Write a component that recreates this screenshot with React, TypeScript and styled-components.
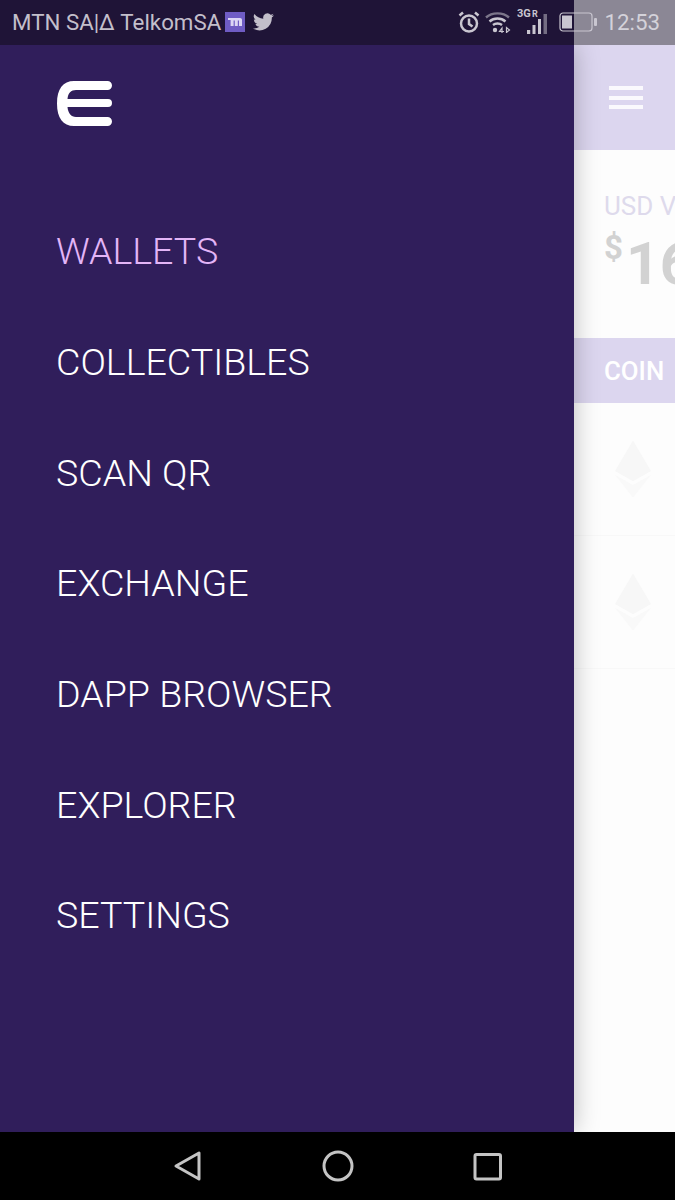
import styled, { createGlobalStyle } from 'styled-components'

const GlobalStyle = createGlobalStyle`
  html, body {
    margin: 0;
    padding: 0;
    background: #000;
  }
  * {
    box-sizing: border-box;
  }
`

const Screen = styled.div`
  width: 675px;
  height: 1200px;
  display: flex;
  flex-direction: column;
  overflow: hidden;
  font-family: Roboto, 'Noto Sans', sans-serif;
`

const StatusBar = styled.div`
  position: relative;
  z-index: 3;
  height: 45px;
  flex: none;
  display: grid;
  grid-template-columns: 574px 101px;
`

const StatusLeft = styled.div`
  background: #1f1437;
  display: flex;
  align-items: center;
  padding: 0 0 2px 12px;
  min-width: 0;
`

const StatusRight = styled.div`
  background: #8b8795;
`

const Carrier = styled.div`
  display: flex;
  align-items: center;
  color: #c3bfcb;
  font-size: 22.3px;
  white-space: nowrap;
`

const TrayIcon = styled.svg<{ $gap?: number }>`
  display: block;
  flex: none;
  margin-left: ${p => p.$gap ?? 0}px;
`

const Tray = styled.div`
  position: absolute;
  right: 15px;
  top: 0;
  height: 45px;
  padding-bottom: 1px;
  display: flex;
  align-items: center;
  color: #c9c6d0;
`

const Clock = styled.span`
  font-size: 22.3px;
  margin-left: 7px;
  color: #d4d2da;
`

const Body = styled.div`
  flex: 1;
  display: flex;
  min-height: 0;
`

const Drawer = styled.nav`
  position: relative;
  z-index: 2;
  width: 574px;
  flex: none;
  background: #301e5b;
  box-shadow: 0 0 24px rgba(0, 0, 0, 0.26);
  padding: 36px 0 0 57px;
`

const Logo = styled.svg`
  display: block;
`

const Menu = styled.ul`
  list-style: none;
  margin: 70px 0 0 -1px;
  padding: 0;
  display: flex;
  flex-direction: column;
`

const MenuItem = styled.li<{ $active?: boolean }>`
  height: 110.7px;
  display: flex;
  align-items: center;
  font-size: 37.6px;
  font-weight: 300;
  color: ${p => (p.$active ? '#e3b5f7' : '#fff')};
`

const Behind = styled.div`
  flex: 1;
  min-width: 0;
  overflow: hidden;
  background: #fdfdfd;
  display: flex;
  flex-direction: column;
`

const TopBar = styled.div`
  height: 105px;
  flex: none;
  background: #dcd6ef;
  padding: 41px 0 0 35px;
`

const Burger = styled.div`
  width: 34px;
  height: 23px;
  border-top: 4px solid #faf9fd;
  border-bottom: 4px solid #faf9fd;
  display: flex;
  align-items: center;

  &::before {
    content: '';
    width: 100%;
    height: 4px;
    background: #faf9fd;
  }
`

const Summary = styled.div`
  height: 188px;
  flex: none;
  padding: 41px 0 0 30px;
  white-space: nowrap;
`

const SummaryLabel = styled.div`
  font-size: 26px;
  line-height: 30px;
  color: #dedaec;
`

const Amount = styled.div`
  display: flex;
  align-items: flex-start;
  color: #d2d2d2;
  font-weight: 700;
  font-size: 59px;
  line-height: 66px;
  margin-top: 10px;
`

const Dollar = styled.span`
  font-size: 33px;
  line-height: 40px;
  margin-top: -3px;
  margin-right: 3px;
`

const TableHead = styled.div`
  height: 65px;
  flex: none;
  background: #dcd6ef;
  color: #fff;
  font-size: 25.8px;
  font-weight: 500;
  display: flex;
  align-items: center;
  padding-left: 30px;
`

const CoinRow = styled.div`
  height: 133px;
  flex: none;
  border-bottom: 1px solid #f8f8f8;
  display: flex;
  align-items: center;
  padding-left: 41px;
`

const NavBar = styled.div`
  position: relative;
  z-index: 3;
  height: 68px;
  flex: none;
  background: #000;
  display: flex;
  justify-content: center;
  align-items: center;
  gap: 119px;
`

const NavIcon = styled.svg`
  display: block;
  width: 32px;
  height: 32px;
  fill: none;
  stroke: #c4c4c4;
  stroke-width: 3;
  stroke-linejoin: round;
`

const EthIcon = () => (
  <svg width="36" height="58" viewBox="0 0 38 60">
    <path d="M19 0 38 32 19 43 0 32Z" fill="#f7f7f7" />
    <path d="M0 36 19 47 38 36 19 60Z" fill="#f9f9f9" />
  </svg>
)

const items = ['WALLETS', 'COLLECTIBLES', 'SCAN QR', 'EXCHANGE', 'DAPP BROWSER', 'EXPLORER', 'SETTINGS']

export default function App() {
  return (
    <Screen>
      <GlobalStyle />
      <StatusBar>
        <StatusLeft>
          <Carrier>
            MTN SA|Δ TelkomSA
            <TrayIcon $gap={4} width="20" height="20" viewBox="0 0 20 20">
              <rect width="20" height="20" fill="#6f5cc4" />
              <path d="M3 6h12c1.300 0 2 .7 2 2v6h-3V8.500h-1.200V14h-3V8.500H8.600V14h-3V8H3Z" fill="#dcd6f5" />
            </TrayIcon>
            <TrayIcon $gap={8} width="21" height="18" viewBox="0 0 24 20">
              <path
                d="M24 2.400a10 10 0 0 1-2.800.8A5 5 0 0 0 23.300.500a9.800 9.800 0 0 1-3.100 1.200 4.900 4.900 0 0 0-8.400 4.500A14 14 0 0 1 1.700.900a4.900 4.900 0 0 0 1.500 6.600 4.900 4.900 0 0 1-2.200-.6 4.900 4.900 0 0 0 3.900 4.900 4.900 4.900 0 0 1-2.200.1 4.900 4.900 0 0 0 4.600 3.400A9.900 9.900 0 0 1 0 17.300 14 14 0 0 0 21.500 4.900 10 10 0 0 0 24 2.400Z"
                fill="#c3bfcb"
              />
            </TrayIcon>
          </Carrier>
        </StatusLeft>
        <StatusRight />
        <Tray>
          <TrayIcon width="24" height="24" viewBox="0 0 24 24" fill="none" stroke="currentColor" strokeWidth="2.500">
            <circle cx="12" cy="13.500" r="8" />
            <path d="M12 8.500V14l3.500 2.500M2.500 5.500 6 2.500M21.500 5.500 18 2.500" />
          </TrayIcon>
          <TrayIcon $gap={4} width="26" height="22" viewBox="0 0 26 22" fill="none" stroke="currentColor" strokeWidth="2.400">
            <path d="M1 6.500C7 1 18 1 24 6.500" opacity="0.55" />
            <path d="M4.500 10.500c4.500-4 11.500-4 16 0M8 14c2.500-2 6.500-2 9 0" />
            <circle cx="10" cy="19" r="2.200" fill="currentColor" stroke="none" />
            <path d="M17 22v-5l-2.500 3.500H19M21.500 16.500v5l3-2.500Z" strokeWidth="1.200" />
          </TrayIcon>
          <TrayIcon $gap={6} width="32" height="28" viewBox="0 0 32 28">
            <text x="0" y="9" fontSize="11" fontWeight="700" fill="currentColor" fontFamily="Roboto, sans-serif">3G</text>
            <text x="15" y="9" fontSize="9" fontWeight="700" fill="currentColor" fontFamily="Roboto, sans-serif">R</text>
            <path d="M10 22h3.200v4H10ZM15.500 17h3v9h-3ZM21 11h3v15h-3Z" fill="currentColor" />
            <path d="M26.500 6h3.500v20h-3.500Z" fill="currentColor" opacity="0.5" />
          </TrayIcon>
          <TrayIcon $gap={10} width="38" height="20" viewBox="0 0 38 20" fill="none">
            <rect x="1" y="1" width="32" height="18" rx="3" stroke="currentColor" strokeWidth="1.200" />
            <rect x="3" y="3.500" width="10" height="13" fill="currentColor" />
            <rect x="35" y="6" width="3" height="8" rx="1" fill="currentColor" />
          </TrayIcon>
          <Clock>12:53</Clock>
        </Tray>
      </StatusBar>
      <Body>
        <Drawer>
          <Logo width="55" height="45" viewBox="0 0 55 45">
            <path
              d="M17 0h33.500a4.500 4.500 0 0 1 0 9H19c-5 0-8 3-8.500 9H51a4 4 0 0 1 0 8H10.500c.5 6 3.500 10 8.500 10h31.500a4.500 4.500 0 0 1 0 9H17C6 45 0 37 0 22.500S6 0 17 0Z"
              fill="#fff"
            />
          </Logo>
          <Menu>
            {items.map((item, i) => (
              <MenuItem key={item} $active={i === 0}>
                {item}
              </MenuItem>
            ))}
          </Menu>
        </Drawer>
        <Behind>
          <TopBar>
            <Burger />
          </TopBar>
          <Summary>
            <SummaryLabel>USD Value</SummaryLabel>
            <Amount>
              <Dollar>$</Dollar>
              16,000
            </Amount>
          </Summary>
          <TableHead>COIN</TableHead>
          <CoinRow>
            <EthIcon />
          </CoinRow>
          <CoinRow>
            <EthIcon />
          </CoinRow>
        </Behind>
      </Body>
      <NavBar>
        <NavIcon viewBox="0 0 32 32">
          <path d="M28 3v26L5 16Z" />
        </NavIcon>
        <NavIcon viewBox="0 0 32 32">
          <circle cx="16" cy="16" r="14" />
        </NavIcon>
        <NavIcon viewBox="0 0 32 32">
          <rect x="2" y="4.500" width="25.500" height="24.500" rx="1.500" />
        </NavIcon>
      </NavBar>
    </Screen>
  )
}
